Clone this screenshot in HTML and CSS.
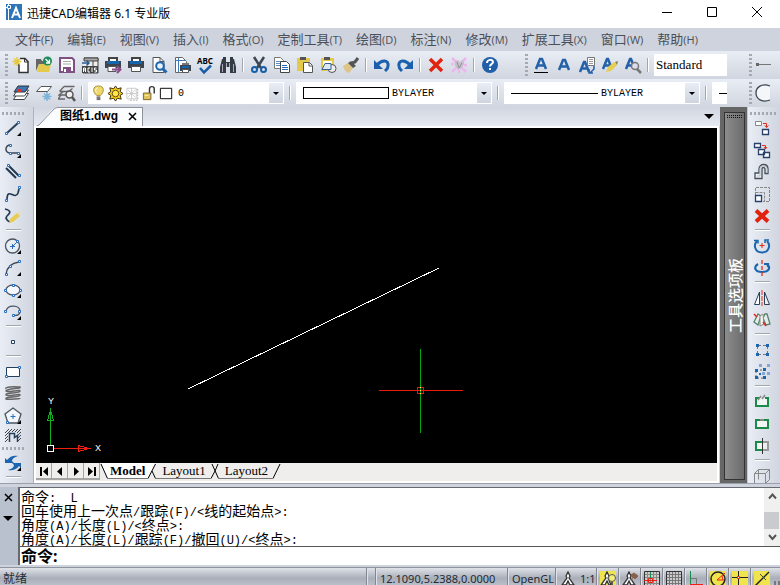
FILE: index.html
```
<!DOCTYPE html>
<html lang="zh-CN">
<head>
    <meta charset="UTF-8">
    <meta name="viewport" content="width=device-width, initial-scale=1.0">
    <title>迅捷CAD编辑器 6.1 专业版</title>
    <link rel="stylesheet" href="styles.css">
</head>
<body>
    <header class="titlebar">
        <svg class="logo" width="16" height="16" viewBox="0 0 16 16">
            <path d="M0 0h16v16H0z" fill="#2d74b8"/>
            <path d="M0 3.500h5M2.500 0v16" stroke="#fff" fill="none"/>
            <path d="M1.500 1.500h3v3h-3z" fill="#2d74b8" stroke="#fff"/>
            <path d="M6 14l4-10 4 10M7.500 10.500h5" stroke="#fff" stroke-width="2" fill="none"/>
        </svg>
        <h1>迅捷CAD编辑器 6.1 专业版</h1>
        <div class="window-buttons">
            <button aria-label="最小化"><svg width="11" height="11"><path d="M0 5.500h10" stroke="#000"/></svg></button>
            <button aria-label="最大化"><svg width="11" height="11"><path d="M.5 .5h9v9h-9z" fill="none" stroke="#000"/></svg></button>
            <button aria-label="关闭"><svg width="11" height="11"><path d="M0 0l10 10M10 0L0 10" stroke="#000"/></svg></button>
        </div>
    </header>

    <nav class="menu">
        <a href="#">文件<span>(F)</span></a>
        <a href="#">编辑<span>(E)</span></a>
        <a href="#">视图<span>(V)</span></a>
        <a href="#">插入<span>(I)</span></a>
        <a href="#">格式<span>(O)</span></a>
        <a href="#">定制工具<span>(T)</span></a>
        <a href="#">绘图<span>(D)</span></a>
        <a href="#">标注<span>(N)</span></a>
        <a href="#">修改<span>(M)</span></a>
        <a href="#">扩展工具<span>(X)</span></a>
        <a href="#">窗口<span>(W)</span></a>
        <a href="#">帮助<span>(H)</span></a>
    </nav>

    <!-- Standard + text style toolbars -->
    <div class="toolbar-row">
        <div class="toolbar">
            <i class="grip"></i>
            <button aria-label="新建"><svg viewBox="0 0 18 18"><path d="M8 2.500h5l3 3v11H7V8" fill="#fff" stroke="#333" stroke-width="1.500"/><path d="M12.500 2.500v3.500H16" fill="none" stroke="#333"/><path d="M5 1v9M.5 5.500h9M2 2.500l6 6M8 2.500l-6 6" stroke="#e5c840" stroke-width="1.300"/></svg></button>
            <button aria-label="打开"><svg viewBox="0 0 18 18"><path d="M1 15V3h5l1 2h4v3H4z" fill="#666"/><path d="M4 8h12l-2 8H2z" fill="#e3ca4c"/><circle cx="12.500" cy="5" r="4.500" fill="#1f8a5b"/><path d="M10.500 3l4 4M14.500 3.500V7H11" stroke="#fff" stroke-width="1.300" fill="none"/></svg></button>
            <button aria-label="保存"><svg viewBox="0 0 18 18"><path d="M2 2h12l2 2v12H2z" fill="#fff" stroke="#805084" stroke-width="2"/><path d="M5 11h8v5H5z" fill="#805084"/><path d="M6 13h2v3H6z" fill="#fff"/><path d="M5 5.500h8M5 8h8" stroke="#aaa"/></svg></button>
            <button aria-label="ACIS"><svg viewBox="0 0 18 18"><path d="M3 2h14v15H2v-6" fill="#eee" stroke="#444"/><path d="M3 2h14v3H3zM12 5v5" fill="#aaa" stroke="#444"/><path d="M1 10h16v7H1z" fill="#444"/><path d="M2.500 16v-4h2v4M2.500 14h2M9 12H7v4h2M11 11.500V16M15.500 12h-2v2h2v2h-2" stroke="#fff" fill="none"/><path d="M1 7h7M5.500 4.500L8 7 5.500 9.500" fill="none" stroke="#2b5c94" stroke-width="1.500"/></svg></button>
            <button aria-label="导出打印"><svg viewBox="0 0 18 18"><path d="M4 1h10v4H4z" fill="#444"/><path d="M6 3h6v2H6z" fill="#fff"/><path d="M1 5h16v7H1z" fill="#3d444d"/><path d="M3 5h12v3H3z" fill="#1467ad"/><path d="M4 10.500h8v5H4z" fill="#fff" stroke="#555"/><path d="M8 13.500h8M13 10l3.500 3.500L13 17" fill="none" stroke="#8a4c8b" stroke-width="2"/></svg></button>
            <button aria-label="打印"><svg viewBox="0 0 18 18"><path d="M4 1h10v4H4z" fill="#444"/><path d="M6 3h6v2H6z" fill="#fff"/><path d="M1 5h16v7H1z" fill="#3d444d"/><path d="M3 5h12v3H3z" fill="#1467ad"/><path d="M4.500 10.500h9v5h-9z" fill="#fff" stroke="#555"/></svg></button>
            <button aria-label="打印预览"><svg viewBox="0 0 18 18"><path d="M3 1.500h7l4 4v11H3z" fill="#fff" stroke="#555"/><path d="M10 1.500v4h4" fill="none" stroke="#555"/><circle cx="10" cy="10" r="3.800" fill="#e7f1fa" stroke="#1f66ad" stroke-width="2"/><path d="M12.500 12.500l4 4" stroke="#1f66ad" stroke-width="3"/></svg></button>
            <button aria-label="页面设置"><svg viewBox="0 0 18 18"><path d="M2.500 1.500h7l4 4v11h-11z" fill="#fff" stroke="#666"/><path d="M5.500 2v14M3 4.500h10" stroke="#3f79b7"/><path d="M7 9h11v6H7z" fill="#3d444d"/><path d="M9 7h7v2H9z" fill="#777"/><path d="M9 10h7v2H9z" fill="#1467ad"/><path d="M9.500 13.500h6v3h-6z" fill="#fff" stroke="#555"/></svg></button>
            <button aria-label="拼写检查"><svg class="abc" viewBox="0 0 18 18"><text x="1" y="8">ABC</text><path d="M4 12l4 4.500 7-7" fill="none" stroke="#1a5da6" stroke-width="2.500"/></svg></button>
            <button aria-label="查找"><svg viewBox="0 0 18 18"><path d="M3 3h4v3h4V3h4l2 8v6h-6v-6H7v6H1v-6z" fill="#333c45"/><path d="M4 1h3v2H4zM11 1h3v2h-3z" fill="#333c45"/><path d="M7.500 7v4M10.500 7v4M3.500 8v8M14.500 8v8" stroke="#aab"/></svg></button>
            <i class="sep"></i>
            <button aria-label="剪切"><svg viewBox="0 0 18 18"><path d="M4 1l7 11M14 1L7 12" stroke="#3b4754" stroke-width="2.500"/><circle cx="4.500" cy="13.500" r="2.500" fill="none" stroke="#175ea8" stroke-width="2"/><circle cx="13.500" cy="13.500" r="2.500" fill="none" stroke="#175ea8" stroke-width="2"/></svg></button>
            <button aria-label="复制"><svg viewBox="0 0 18 18"><path d="M1.500 1.500h6l3 3v8h-9z" fill="#fff" stroke="#777"/><path d="M3 5.500h5M3 7.500h5M3 9.500h5" stroke="#5490cf"/><path d="M7.500 5.500h6l3 3v8h-9z" fill="#fff" stroke="#444"/><path d="M9 9.500h5M9 11.500h6M9 13.500h6" stroke="#2467b4"/></svg></button>
            <button aria-label="粘贴"><svg viewBox="0 0 18 18"><path d="M1 2h13v13H1z" fill="#e3ca4c"/><path d="M4 1h6v3H4z" fill="#555"/><path d="M7.500 6.500h6l3 3v7h-9z" fill="#fff" stroke="#555"/><path d="M13 7v3h3" fill="none" stroke="#555"/></svg></button>
            <button aria-label="选择性粘贴"><svg viewBox="0 0 18 18"><path d="M2 2h13v13H2z" fill="#e3ca4c"/><path d="M4 5h9v8H4z" fill="#fff"/><path d="M5 1h6v3H5z" fill="#555"/><circle cx="13" cy="12.500" r="4" fill="#eee" stroke="#555"/><path d="M6 7.500h6v6H3z" fill="#dde8f5" stroke="#3b5f8c"/></svg></button>
            <button aria-label="格式刷"><svg viewBox="0 0 18 18"><path d="M1 10l5-3 5 5-4 5c-3 0-5-4-6-7z" fill="#dfc487"/><path d="M6 7l3-2 5 5-3 2z" fill="#555"/><path d="M10 7l3-1 3-4" fill="none" stroke="#555" stroke-width="3"/></svg></button>
            <i class="sep"></i>
            <button aria-label="撤销"><svg viewBox="0 0 18 18"><path d="M1 4v9h9z" fill="#1a60ad"/><path d="M4 9c5-6 12-5 11 1 0 3-2 4-3 5" fill="none" stroke="#1a60ad" stroke-width="3"/></svg></button>
            <button aria-label="重做"><svg viewBox="0 0 18 18"><path d="M17 4v9H8z" fill="#1a60ad"/><path d="M14 9C9 3 2 4 3 10c0 3 2 4 3 5" fill="none" stroke="#1a60ad" stroke-width="3"/></svg></button>
            <i class="sep"></i>
            <button aria-label="删除"><svg viewBox="0 0 18 18"><path d="M3 3l12 12M15 3L3 15" stroke="#e02410" stroke-width="3.500"/></svg></button>
            <button aria-label="分解"><svg viewBox="0 0 18 18"><path d="M2 2l4 4M16 2l-4 4M2 16l4-4M16 16l-4-4M1 8h3M14 9h3M9 14v3" stroke="#eeb5ef" stroke-width="2.500"/><path d="M5 5l3-1 2 2 3-2 1 4-2 4-4 2-3-4z" fill="#c8bccd"/><path d="M7 6l2 6 3-5" stroke="#8d9691" fill="none"/></svg></button>
            <i class="sep"></i>
            <button aria-label="帮助"><svg viewBox="0 0 18 18"><circle cx="9" cy="9" r="8" fill="#215fa9"/><path d="M6 7c0-4 6-4 6-1 0 2-3 2-3 4.500" fill="none" stroke="#fff" stroke-width="2"/><path d="M8 12h2v2H8z" fill="#fff"/></svg></button>
        </div>
        <div class="toolbar text-bar">
            <i class="grip"></i>
            <button aria-label="下划线文字"><svg viewBox="0 0 18 18"><path d="M4 13L8 3h2l4 10M6 9.500h6" fill="none" stroke="#2461a8" stroke-width="2.500"/><path d="M2 16.500h14" stroke="#000"/></svg></button>
            <button aria-label="文字"><svg viewBox="0 0 18 18"><path d="M4 14L8 4h2l4 10M6 10.500h6" fill="none" stroke="#2461a8" stroke-width="2.500"/></svg></button>
            <button aria-label="多行文字"><svg viewBox="0 0 18 18"><path d="M2 16L6 6h1l4 10M4 12.500h5" fill="none" stroke="#2461a8" stroke-width="2.500"/><path d="M9.500 1.500h7v8h-7z" fill="#fff" stroke="#777"/><path d="M11 3.500h4M11 5.500h4M11 7.500h4" stroke="#999"/><path d="M16 10v3l-4 4M11 13v4h4" fill="none" stroke="#2461a8" stroke-width="1.500"/></svg></button>
            <button aria-label="编辑文字"><svg viewBox="0 0 18 18"><path d="M2 13L6 3h1l4 10M4 9.500h5" fill="none" stroke="#2461a8" stroke-width="2.500"/><path d="M5 16l2-5 6-5 3 3-6 6z" fill="#e7cd52"/><path d="M14 6l3-1-1 4z" fill="#8a7e4c"/></svg></button>
            <button aria-label="查找文字"><svg viewBox="0 0 18 18"><path d="M2 13L6 3h1l4 10M4 9.500h5" fill="none" stroke="#2461a8" stroke-width="2.500"/><circle cx="11" cy="10" r="3.500" fill="#dde" stroke="#777" stroke-width="1.500"/><path d="M13 13l4 4" stroke="#777" stroke-width="2.500"/></svg></button>
            <i class="sep"></i>
            <input class="style-name" type="text" value="Standard" aria-label="文字样式">
        </div>
        <div class="toolbar end-bar">
            <i class="grip"></i>
            <button aria-label="点标记"><svg viewBox="0 0 18 18"><path d="M4 8.500h14" stroke="#777"/><path d="M3 7h3v3H3z" fill="#666"/></svg></button>
        </div>
    </div>

    <!-- Layer, colour and linetype toolbars -->
    <div class="toolbar-row">
        <div class="toolbar props-bar">
            <i class="grip"></i>
            <button aria-label="图层"><svg viewBox="0 0 18 18"><path d="M5.500 9.500h11l-4 6H1.500z" fill="#fff" stroke="#444"/><path d="M5.500 6h11l-4 6H1.500z" fill="#fff" stroke="#444"/><path d="M6 2h11l-4 6H2z" fill="#3c74b5" stroke="#333"/><path d="M6 5h3v3H6z" fill="#d63426"/></svg></button>
            <button aria-label="冻结图层"><svg viewBox="0 0 18 18"><path d="M6 2.500h10.500l-4 5H1.500z" fill="#fff" stroke="#555"/><path d="M12 8v9M7.500 12.500h9M9 9.500l6 6M15 9.500l-6 6" stroke="#7db2d9" stroke-width="1.500"/></svg></button>
            <button aria-label="查找图层"><svg viewBox="0 0 18 18"><path d="M6 2.500h10.500M1.500 7.500L6 2.500M1.500 7.500h9l4-3M6 7l-5 4h7M3 11l-3 4h7" fill="none" stroke="#666" stroke-width="1.300"/><circle cx="11.500" cy="10.500" r="3.500" fill="#eee" stroke="#555" stroke-width="1.500"/><path d="M14 13l3 4" stroke="#555" stroke-width="2.500"/></svg></button>
            <i class="sep"></i>
            <div class="combo layer">
                <svg viewBox="0 0 18 18"><path d="M9 1c-7 0-6 7-2 10h4c4-3 5-10-2-10z" fill="#f1d86b" stroke="#a08c3a"/><path d="M8 3c-3 1-2 4-1 5" stroke="#fff" fill="none"/><path d="M7 12h4v4H7z" fill="#777"/></svg>
                <svg viewBox="0 0 18 18"><path d="M9 1l2 3 4-1-1 4 3 2-3 2 1 4-4-1-2 3-2-3-4 1 1-4-3-2 3-2-1-4 4 1z" fill="#f3c71f" stroke="#3d300c"/><circle cx="9" cy="9" r="3.500" fill="#ffe74a" stroke="#5d4a10"/></svg>
                <svg viewBox="0 0 18 18"><path d="M8 3v12M2 9h12M4 5l8 8M12 5l-8 8M3 3.500h10v11H3z" fill="none" stroke="#ccc"/><path d="M14.500 4v12H5" fill="none" stroke="#aaa" stroke-dasharray="2 1"/></svg>
                <svg viewBox="0 0 18 18"><path d="M9 9V4c0-3 5-3 5 0v5" fill="none" stroke="#333" stroke-width="1.500"/><path d="M2.500 8.500h8v7h-8z" fill="#e1c45b" stroke="#77622b"/><path d="M4 11h4" stroke="#fff0af"/></svg>
                <svg viewBox="0 0 18 18"><path d="M2.500 3.500h12v11h-12z" fill="#fff" stroke="#000"/></svg>
                <select aria-label="图层"><option>0</option></select>
                <i class="arrow"></i>
            </div>
            <i class="sep"></i>
            <div class="combo">
                <i class="swatch"></i>
                <select aria-label="颜色"><option>BYLAYER</option></select>
                <i class="arrow"></i>
            </div>
            <i class="sep"></i>
            <div class="combo">
                <i class="dash"></i>
                <select aria-label="线型"><option>BYLAYER</option></select>
                <i class="arrow"></i>
            </div>
            <i class="sep"></i>
            <div class="combo cut"><i class="dash"></i></div>
        </div>
        <div class="toolbar end-bar">
            <i class="grip"></i>
            <button aria-label="圆弧"><svg viewBox="0 0 18 18"><path d="M17 2c-8-3-14 1-14 7s6 10 14 7" fill="#f4f6fa" stroke="#3d4650" stroke-width="1.300"/></svg></button>
        </div>
    </div>

    <main class="workspace">
        <aside class="side left" aria-label="绘图工具">
            <i class="hgrip"></i>
            <button class="more" aria-label="直线"><svg viewBox="0 0 18 18"><path d="M3 14L14 4" stroke="#27415c" stroke-width="2"/><path d="M1.500 13.500h2v2h-2zM13.500 2.500h2v2h-2z" class="node"/></svg></button>
            <button class="more" aria-label="多段线"><svg viewBox="0 0 18 18"><path d="M7 4C1 3 0 12 6 12h9" fill="none" stroke="#3d4650" stroke-width="1.500"/><path d="M5.500 3.500h2v2h-2zM5.500 11.500h2v2h-2zM13.500 11.500h2v2h-2z" class="node"/></svg></button>
            <button aria-label="双线"><svg viewBox="0 0 18 18"><path d="M2 5l10 10M5 3l10 10" stroke="#22394f" stroke-width="2"/><path d="M3.500 1.500h2v2h-2zM14.500 11.500h2v2h-2z" class="node"/></svg></button>
            <button aria-label="样条曲线"><svg viewBox="0 0 18 18"><path d="M3 15c0-14 8 1 11-7l1-4" fill="none" stroke="#22394f" stroke-width="1.700"/><path d="M1.500 14.500h2v2h-2zM14.500 1.500h2v2h-2z" class="node"/></svg></button>
            <button aria-label="徒手画"><svg viewBox="0 0 18 18"><path d="M1 2c8 2 4 5 2 7s0 5 3 6" fill="none" stroke="#22394f" stroke-width="1.700"/><path d="M5 16l1-4 7-6 3 3-7 6z" fill="#e7cd52"/><path d="M14 5l2-1 1 2-1 2z" fill="#e9dfa5"/></svg></button>
            <i class="hsep"></i>
            <button class="more" aria-label="圆"><svg viewBox="0 0 18 18"><circle cx="8.500" cy="9" r="7" fill="#e8eef6" stroke="#4a5561" stroke-width="1.300"/><path d="M6 9.500h5M8.500 7v5M9 9l4-4" stroke="#2a6ebd"/><path d="M12.500 3.500h2v2h-2z" class="node"/></svg></button>
            <button class="more" aria-label="圆弧"><svg viewBox="0 0 18 18"><path d="M2 15C3 8 8 4 15 3" fill="none" stroke="#3d4650" stroke-width="1.300"/><path d="M1.500 14.500h2v2h-2zM5.500 6.500h2v2h-2zM14.500 1.500h2v2h-2z" class="node"/></svg></button>
            <button class="more" aria-label="椭圆"><svg viewBox="0 0 18 18"><ellipse cx="9" cy="9" rx="7" ry="5" fill="#f4f7fb" stroke="#4a5561" stroke-width="1.300"/><path d="M.5 8.500h2v2h-2zM15.500 8.500h2v2h-2zM8.500 3.500h2v2h-2zM8.500 13.500h2v2h-2z" class="node"/></svg></button>
            <button class="more" aria-label="椭圆弧"><svg viewBox="0 0 18 18"><path d="M2 8c2-7 14-6 14 0 0 4-3 5-7 4" fill="none" stroke="#4a5561" stroke-width="1.300"/><path d="M.5 7.500h2v2h-2zM14.500 7.500h2v2h-2zM8.500 11.500h2v2h-2z" class="node"/></svg></button>
            <i class="hsep"></i>
            <button aria-label="点"><svg viewBox="0 0 18 18"><path d="M7.500 7.500h3v3h-3z" fill="#fff" stroke="#27415c"/></svg></button>
            <i class="hsep"></i>
            <button aria-label="矩形"><svg viewBox="0 0 18 18"><path d="M2.500 4.500h13v9h-13z" fill="#fff" stroke="#27415c"/><path d="M1.500 12.500h2v2h-2zM14.500 3.500h2v2h-2z" class="node"/></svg></button>
            <button aria-label="弹簧"><svg viewBox="0 0 18 18"><path d="M2 4c-2-3 12-2 14-2 2 2-13 1-14 4 2 2 14-2 14 0 0 3-15 1-14 4 3 2 14-2 14 0 0 3-15 1-14 4 3 1 14-1 14 0" fill="none" stroke="#666" stroke-width="1.500"/></svg></button>
            <button class="more" aria-label="多边形"><svg viewBox="0 0 18 18"><path d="M9 1l8 6-3 9H4L1 7z" fill="#f2f6fa" stroke="#4a5561" stroke-width="1.300"/><path d="M6.500 9.500h5M9 7v5" stroke="#2a6ebd"/><path d="M2.500 14.500h2v2h-2z" class="node"/></svg></button>
            <button class="short" aria-label="填充"><svg viewBox="0 0 18 18"><path d="M1 6l4-4M1 9l7-7M1 12l3-3M1 15l3-3M8 5l3-3M11 5l3-3M13 6l4-4M14 8l3-3M14 11l3-3M14 14l3-3" stroke="#3d4650"/><path d="M5.500 15V6.500h5v4l3-2V15" fill="none" stroke="#27415c" stroke-width="1.500"/></svg></button>
            <i class="hgrip"></i>
            <button class="more" aria-label="重生成"><svg viewBox="0 0 18 18"><path d="M1 4l2 2c3-4 7-5 11-4-4 1-6 3-6 5l2 2H1z" fill="#1b66ae"/><path d="M17 14l-2-2c-3 4-7 5-11 4 4-1 6-3 6-5l-2-2h9z" fill="#1b66ae"/></svg></button>
            <i class="hsep"></i>
        </aside>

        <section class="document">
            <div class="doc-tabs">
                <svg class="slant" width="22" height="20"><path d="M0 20C6 18 14 0 22 0v20z" fill="#fbfcfe"/><path d="M0 19.500L3 18 18 2q2-1.500 4-1.500" fill="none" stroke="#8e939e"/></svg>
                <div class="doc-tab">图纸1.dwg
                    <button aria-label="关闭图纸"><svg width="9" height="9"><path d="M1 1l7 7M8 1L1 8" stroke="#000" stroke-width="1.500"/></svg></button>
                </div>
                <button class="tab-list" aria-label="图纸列表"><i class="tri"></i></button>
            </div>
            <div class="sheet">
                <svg class="drawing" shape-rendering="crispEdges">
                    <path d="M152 261L403 140" stroke="#fff"/>
                    <!-- cursor -->
                    <path d="M343 262.500h84" stroke="#e8190c"/>
                    <path d="M384.500 221v84" stroke="#00a814"/>
                    <rect x="381.500" y="259.500" width="6" height="6" fill="none" stroke="#e8190c"/>
                    <path d="M384 259h1v1h-1zM384 262h1v1h-1zM384 265h1v1h-1z" fill="#ffe85a"/>
                    <!-- UCS axes -->
                    <path d="M14.500 317v-34M11.500 292.500h6L14.500 282z" fill="none" stroke="#12b020"/>
                    <path d="M18 320.500h34M42.500 317.500v6L53 320.500z" fill="none" stroke="#f01f10"/>
                    <rect x="11.500" y="317.500" width="6" height="6" fill="none" stroke="#fff"/>
                    <text x="12" y="276">Y</text>
                    <text x="59" y="323">X</text>
                </svg>
                <div class="layout-tabs">
                    <button class="nav" aria-label="第一个"><svg viewBox="0 0 14 14"><path d="M4 3v9" stroke="#000" stroke-width="2"/><path d="M11 3v9L6 7.500z"/></svg></button>
                    <button class="nav" aria-label="上一个"><svg viewBox="0 0 14 14"><path d="M9 3v9L4 7.500z"/></svg></button>
                    <button class="nav" aria-label="下一个"><svg viewBox="0 0 14 14"><path d="M5 3v9l5-4.500z"/></svg></button>
                    <button class="nav" aria-label="最后一个"><svg viewBox="0 0 14 14"><path d="M3 3v9l5-4.500z"/><path d="M10 3v9" stroke="#000" stroke-width="2"/></svg></button>
                    <svg class="edge" viewBox="0 0 8 16"><path d="M1 0h7v16z" fill="#fff"/><path d="M1 1l6.500 14.500" stroke="#000" fill="none"/></svg>
                    <a href="#" class="active">Model</a>
                    <svg class="edge" viewBox="0 0 8 16"><path d="M0 0h7L0 16z" fill="#fff"/><path d="M7.500 1L0 15.500M4 8l3.500 7.500" stroke="#000" fill="none"/></svg>
                    <a href="#">Layout1</a>
                    <svg class="edge" viewBox="0 0 8 16"><path d="M4 8L0 15.500M1 1l6.500 14.500M7 1L4 8" stroke="#000" fill="none"/></svg>
                    <a href="#">Layout2</a>
                    <svg class="edge" viewBox="0 0 8 16"><path d="M7 1L0 15.500" stroke="#000" fill="none"/></svg>
                </div>
            </div>
        </section>

        <aside class="palette">
            <div class="palette-bar">
                <i class="palette-grip"></i>
                <span>工具选项板</span>
            </div>
        </aside>

        <aside class="side right" aria-label="修改工具">
            <i class="hgrip"></i>
            <button aria-label="复制对象"><svg viewBox="0 0 18 18"><path d="M2.500 2.500h6v4h-6z" fill="#fff" stroke="#888"/><path d="M9.500 10.500h6v5h-6z" fill="#fff" stroke="#27416b" stroke-width="1.300"/><path d="M10 4.500h3.500V8M12 6.500l1.500 2 2-2" fill="none" stroke="#df2b19"/></svg></button>
            <button aria-label="多重复制"><svg viewBox="0 0 18 18"><path d="M1.500 2.500h6v4h-6zM5.500 8.500h6v5h-6zM10.500 11.500h6v5h-6z" fill="#fff" stroke="#27416b" stroke-width="1.300"/><path d="M9 4.500h3.500v3M11 6l1.500 2L14 6" fill="none" stroke="#df2b19"/></svg></button>
            <button aria-label="偏移"><svg viewBox="0 0 18 18"><path d="M2 15.500V10h4V6c0-6 9-6 9 0v4.500h-3V6c0-2-3-2-3 0v9.500z" fill="#eef1f5" stroke="#45505e" stroke-width="1.300"/><path d="M4 13h3V6C7 2 14 2 14 6v4" fill="none" stroke="#bbb"/></svg></button>
            <button aria-label="缩放"><svg viewBox="0 0 18 18"><path d="M2.500 10V2.500h14v14H10M2.500 7.500h9v9" fill="none" stroke="#888" stroke-dasharray="3 1"/><path d="M2.500 10.500h6v6h-6z" fill="#fff" stroke="#27416b" stroke-width="1.300"/></svg></button>
            <button aria-label="删除"><svg viewBox="0 0 18 18"><path d="M3 3.500l12 11M15 3.500l-12 11" stroke="#e3220e" stroke-width="4"/></svg></button>
            <i class="hsep"></i>
            <button aria-label="旋转"><svg viewBox="0 0 18 18"><path d="M4 4C0 8 2 15.500 9 15.500S18 8 14 4" fill="none" stroke="#1b66ae" stroke-width="2"/><path d="M1 3.500h4v3M12 6V3h4" fill="none" stroke="#1b66ae" stroke-width="1.500"/><path d="M6.500 8.500h5M9 6v5" stroke="#df2b19"/></svg></button>
            <button aria-label="三维旋转"><svg viewBox="0 0 18 18"><path d="M5 5c-5 3-3 8 4 8s9-4 5-8M11 5h4v3" fill="none" stroke="#1b66ae" stroke-width="2.200"/><path d="M9 1v16" stroke="#ef2c18" stroke-dasharray="4 2" stroke-width="1.300"/></svg></button>
            <i class="hsep"></i>
            <button aria-label="镜像"><svg viewBox="0 0 18 18"><path d="M6.500 3v12.500h-5z" fill="#fff" stroke="#27415c"/><path d="M11.500 3v12.500h5z" fill="#eee" stroke="#27415c"/><path d="M9 1v16" stroke="#ef2c18" stroke-dasharray="5 1"/></svg></button>
            <button aria-label="三维镜像"><svg viewBox="0 0 18 18"><path d="M5 3l3 2-3 9-4-3zM12 3l2 0 3 10-4 1-3-7z" fill="#e7eee9" stroke="#578171" stroke-width="1.300"/><path d="M7 5l3-2 1 10-4 2z" fill="#f0f2f2" stroke="#888"/><path d="M1 3l3 3M10 11l3 4" stroke="#df2b19" stroke-width="1.500"/></svg></button>
            <i class="hsep"></i>
            <button aria-label="阵列"><svg viewBox="0 0 18 18"><path d="M4.500 5v8M14.500 5v8M5 4.500h9M5 13.500h9" stroke="#777" stroke-dasharray="3 2"/><path d="M3 3h3v3H3zM13 3h3v3h-3zM3 12h3v3H3zM13 12h3v3h-3z" fill="#1b66ae"/></svg></button>
            <button aria-label="三维阵列"><svg viewBox="0 0 18 18"><path d="M3 8v6M3 7h12M4 15h7" stroke="#666" stroke-dasharray="2 2"/><path d="M6 1h3v3H6zM14 1h3v3h-3zM14 9h3v3h-3zM9 9h3v3H9z" fill="#7da8d7"/><path d="M2 6h3v3H2zM10 5h3v3h-3zM2 13h3v3H2zM10 13h3v3h-3zM6 10h2v2H6z" fill="#1b66ae"/></svg></button>
            <i class="hsep"></i>
            <button aria-label="打断"><svg viewBox="0 0 18 18"><path d="M6 5H3v8h12V5h-3" fill="#f2f5f4" stroke="#1b8b49" stroke-width="2"/><path d="M5 7l3-4M9 6l3-4" stroke="#888" stroke-width="1.500"/></svg></button>
            <button aria-label="合并"><svg viewBox="0 0 18 18"><path d="M3 5h12v8H3z" fill="#f2f5f4" stroke="#1b8b49" stroke-width="2"/><path d="M7 5h4" stroke="#888" stroke-width="2"/></svg></button>
            <button aria-label="修剪"><svg viewBox="0 0 18 18"><path d="M10 5H3v8h7" fill="#f2f5f4" stroke="#1b8b49" stroke-width="2"/><path d="M10 5h5v8h-5" fill="#eee" stroke="#999" stroke-width="2"/><path d="M9.500 1v16" stroke="#333"/></svg></button>
            <i class="hsep"></i>
            <button aria-label="长方体"><svg viewBox="0 0 18 18"><path d="M1.500 6.500h11v10h-11zM1.500 6.500l4-4h11v10l-4 4M12.500 6.500l4-4M5.500 2.500v10" fill="none" stroke="#888"/></svg></button>
        </aside>
    </main>

    <section class="command">
        <div class="command-side">
            <button aria-label="关闭命令行"><svg width="9" height="9"><path d="M1 1l7 7M8 1L1 8" stroke="#000" stroke-width="1.500"/></svg></button>
            <button aria-label="命令行选项"><i class="tri"></i></button>
        </div>
        <div class="command-body">
            <div class="history">
                <div class="lines">
                    <p>命令<span>:  L</span></p>
                    <p>回车使用上一次点<span>/</span>跟踪<span>(F)/&lt;</span>线的起始点<span>&gt;:</span></p>
                    <p>角度<span>(A)/</span>长度<span>(L)/&lt;</span>终点<span>&gt;:</span></p>
                    <p>角度<span>(A)/</span>长度<span>(L)/</span>跟踪<span>(F)/</span>撤回<span>(U)/&lt;</span>终点<span>&gt;:</span></p>
                </div>
                <div class="scroll">
                    <button aria-label="向上"><svg width="9" height="7"><path d="M1 5.500l3.500-4 3.500 4" fill="none" stroke="#555" stroke-width="2"/></svg></button>
                    <i class="thumb"></i>
                    <button aria-label="向下"><svg width="9" height="7"><path d="M1 1l3.500 4L8 1" fill="none" stroke="#555" stroke-width="2"/></svg></button>
                </div>
            </div>
            <div class="prompt">
                <label for="cmd">命令:</label>
                <input id="cmd" type="text">
            </div>
        </div>
    </section>

    <footer class="status">
        <span class="ready">就绪</span>
        <span class="cell gap"></span>
        <span class="cell coords">12.1090,5.2388,0.0000</span>
        <span class="cell gl">OpenGL</span>
        <span class="cell scale">
            <svg viewBox="0 0 16 16"><path d="M8 1l2 4-1 2 5 7h-4l-2-4-2 4H2l5-7-1-2z" fill="#fff" stroke="#333" stroke-width="1.300"/></svg>
            1:1
        </span>
        <button class="cell" aria-label="注释可见性"><svg viewBox="0 0 16 16"><path d="M0 0h16v16H0z" fill="#f0e44c"/><path d="M7 1l2 4-1 2 3 7H9l-2-4-2 4H1l5-7-1-2z" fill="#fff" stroke="#333" stroke-width="1.300"/><circle cx="12" cy="7" r="3.500" fill="#f5ed7a" stroke="#555"/><path d="M11 11h2v4h-2z" fill="#555"/></svg></button>
        <button class="cell" aria-label="自动比例"><svg viewBox="0 0 16 16"><path d="M7 1l2 4-1 2 5 7H9l-2-4-2 4H1l5-7-1-2z" fill="#fff" stroke="#333" stroke-width="1.300"/><path d="M9 4l3-2 4 3-3 3zM11 6l-2 4" fill="#87604e" stroke="#87604e"/></svg></button>
        <button class="cell" aria-label="捕捉"><svg viewBox="0 0 16 16"><path d="M.5.5h15v15H.5z" fill="#ccc" stroke="#333"/><path d="M3.500 1v14M6.500 1v14M9.500 1v14M12.500 1v14M1 3.500h14M1 6.500h14M1 12.500h14" stroke="#888"/><path d="M6.500 1v6" stroke="#1b8b49"/><path d="M0 9.500h13M4.500 7.500h4v4h-4z" fill="none" stroke="#ef2010"/></svg></button>
        <button class="cell" aria-label="栅格"><svg viewBox="0 0 16 16"><path d="M.5.5h15v15H.5z" fill="#ccc" stroke="#333"/><path d="M3.500 1v14M6.500 1v14M9.500 1v14M12.500 1v14M1 3.500h14M1 6.500h14M1 9.500h14M1 12.500h14" stroke="#777"/></svg></button>
        <button class="cell" aria-label="正交"><svg viewBox="0 0 16 16"><path d="M2.500 0v13" stroke="#1b8b49"/><path d="M2.500 7.500h6v6" fill="none" stroke="#777"/><path d="M2 13.500h13" stroke="#ef2010"/></svg></button>
        <button class="cell" aria-label="极轴"><svg viewBox="0 0 16 16"><path d="M0 0h16v16H0z" fill="#f0e44c"/><circle cx="8" cy="8" r="7" fill="none" stroke="#222" stroke-width="1.500"/><path d="M15 2L7 9h7M12 5l1 4" fill="none" stroke="#ef2010"/></svg></button>
        <button class="cell" aria-label="对象捕捉"><svg viewBox="0 0 16 16"><path d="M0 0h16v16H0z" fill="#f0e44c"/><path d="M6.500 0v16M0 6.500h16" stroke="#222"/><path d="M5.500 5.500h2v2h-2z" fill="#fff" stroke="#ef2010"/></svg></button>
        <button class="cell" aria-label="对象追踪"><svg viewBox="0 0 16 16"><path d="M0 0h16v16H0z" fill="#f0e44c"/><path d="M1 15L15 1" stroke="#222" stroke-width="1.500"/><path d="M6 3l6 6M0 14.500h9" stroke="#444"/></svg></button>
        <i class="resize"></i>
    </footer>
</body>
</html>
```

FILE: styles.css
```
* {
    box-sizing: border-box;
}
body {
    margin: 0;
    height: 100vh;
    display: flex;
    flex-direction: column;
    overflow: hidden;
    background-color: #ced3dd;
    font-family: "Noto Sans", "Noto Sans CJK SC", sans-serif;
    font-size: 12px;
    color: #000;
}
button {
    display: flex;
    align-items: center;
    justify-content: center;
    padding: 0;
    border: none;
    background: none;
    flex: none;
}
a {
    color: inherit;
    text-decoration: none;
}
svg {
    flex: none;
    display: block;
}
i {
    flex: none;
}

/* Title bar */
.titlebar {
    flex: none;
    display: flex;
    align-items: center;
    height: 28px;
    padding-left: 6px;
    background-color: #fff;
}
.titlebar h1 {
    flex: 1;
    margin: 0 0 0 5px;
    padding-bottom: 2px;
    font-size: 12px;
    font-weight: normal;
}
.logo {
    margin-bottom: 4px;
}
.window-buttons {
    display: flex;
    padding-bottom: 3px;
}
.window-buttons button {
    width: 45px;
    height: 24px;
}

/* Menu */
.menu {
    flex: none;
    display: flex;
    align-items: center;
    gap: 14px;
    height: 23px;
    padding: 0 15px 3px;
    font-size: 13px;
    white-space: nowrap;
    color: #4a4f59;
}
.menu span {
    font-family: "Open Sans", sans-serif;
    font-size: 11px;
}

/* Toolbars */
.toolbar-row {
    flex: none;
    display: flex;
    height: 28px;
    background: linear-gradient(#e9edf5, #d0d5df);
}
.toolbar {
    display: flex;
    align-items: center;
    flex: none;
    width: 520px;
}
.toolbar button {
    width: 23px;
    height: 24px;
}
.toolbar svg {
    width: 18px;
    height: 18px;
}
.toolbar .abc {
    overflow: visible;
    font-family: "Noto Sans", sans-serif;
    font-size: 8px;
    font-weight: bold;
}
.text-bar {
    width: auto;
    flex: 1;
}
.props-bar {
    width: auto;
    flex: 1;
}
.end-bar {
    width: 36px;
    padding-right: 9px;
    overflow: hidden;
}
.end-bar button {
    width: 18px;
}
.grip {
    width: 3px;
    height: 22px;
    margin: 0 1px 0 5px;
    background: repeating-linear-gradient(#a4a8b1 0 2px, transparent 2px 4px);
}
.sep {
    width: 2px;
    height: 14px;
    margin: 0 3px;
    border-left: 1px solid #a2a6ae;
    background-color: #fff;
}
.style-name {
    width: 73px;
    height: 22px;
    margin-left: 2px;
    padding: 0 2px;
    border: none;
    background-color: #fff;
    font-family: "Liberation Serif", serif;
    font-size: 13px;
}
.combo {
    position: relative;
    display: flex;
    align-items: center;
    flex: none;
    width: 196px;
    height: 22px;
    margin: 0 2px;
    background-color: #fff;
}
.combo.layer svg {
    width: 17px;
    height: 17px;
}
.layer {
    padding-left: 2px;
}
.combo select {
    flex: 1;
    min-width: 0;
    height: 22px;
    padding: 0 3px;
    border: none;
    appearance: none;
    background: linear-gradient(#e9edf4, #cfd4de) right 1px center / 14px 20px no-repeat;
    font-family: "Liberation Mono", monospace;
    font-size: 10px;
    color: #000;
}
.arrow {
    position: absolute;
    right: 5px;
    top: 10px;
    border: 3px solid transparent;
    border-top-color: #000;
    border-bottom: none;
    pointer-events: none;
}
.swatch {
    width: 86px;
    height: 12px;
    margin-left: 7px;
    border: 1px solid #000;
}
.dash {
    width: 87px;
    height: 1px;
    margin-left: 7px;
    background-color: #000;
}
.combo.cut {
    width: 15px;
    overflow: hidden;
}

/* Workspace */
.workspace {
    flex: 1;
    min-height: 0;
    display: flex;
    border-bottom: 1px solid #9a9fa9;
}
.side {
    flex: none;
    display: flex;
    flex-direction: column;
    overflow: hidden;
    background: linear-gradient(to right, #e9edf5, #d0d5df);
}
.left {
    width: 34px;
    padding-right: 7px;
    border-right: 1px solid #aeb3bc;
}
.right {
    width: 32px;
    padding-right: 4px;
}
.side button {
    position: relative;
    width: 100%;
    height: 22px;
}
.side svg {
    width: 18px;
    height: 18px;
}
.side .short {
    height: 15px;
    overflow: hidden;
    align-items: flex-start;
}
.node {
    fill: #fff;
    stroke: #2a6ebd;
}
/* flyout corner */
.more::after {
    content: "";
    position: absolute;
    right: 5px;
    bottom: 3px;
    border: 2px solid #000;
    border-top-color: transparent;
    border-left-color: transparent;
}
.hgrip {
    height: 3px;
    margin: 5px 0 2px 2px;
    background: repeating-linear-gradient(to right, #a4a8b1 0 2px, transparent 2px 4px);
}
.hsep {
    width: 15px;
    height: 2px;
    margin: 2px auto 4px;
    border-top: 1px solid #a2a6ae;
    background-color: #fff;
}
.document {
    flex: 1;
    min-width: 0;
    display: flex;
    flex-direction: column;
}
.doc-tabs {
    flex: none;
    display: flex;
    height: 19px;
    padding-left: 2px;
    background: linear-gradient(#d0d5df, #e6eaf2);
}
.doc-tab {
    display: flex;
    align-items: center;
    gap: 10px;
    padding: 0 5px 2px 2px;
    border: 1px solid #8e939e;
    border-width: 1px 1px 0 0;
    background-color: #fbfcfe;
    font-family: "Liberation Sans", "Noto Sans CJK SC", sans-serif;
    font-weight: bold;
    line-height: 18px;
}
.tab-list {
    width: 20px;
    margin-left: auto;
    padding-right: 2px;
}
.tri {
    border: 5px solid transparent;
    border-top-color: #000;
    border-bottom: none;
}
.sheet {
    flex: 1;
    min-height: 0;
    display: flex;
    flex-direction: column;
    margin-right: 1px;
    border: 2px solid #fff;
}
.drawing {
    flex: 1;
    min-height: 0;
    width: 100%;
    background-color: #000;
}
.drawing text {
    font-family: "Liberation Sans", sans-serif;
    font-size: 9px;
    fill: #fff;
}
.layout-tabs {
    flex: none;
    display: flex;
    height: 18px;
    background-color: #efeeec;
    font-family: "Liberation Serif", serif;
    font-size: 13px;
}
.nav {
    width: 16px;
    height: 17px;
    border-right: 1px solid #a5a5a5;
    border-bottom: 2px solid #a5a5a5;
}
.nav svg {
    width: 14px;
    height: 14px;
}
.edge {
    width: 8px;
    height: 16px;
}
.layout-tabs a {
    height: 16px;
    padding: 0 5px 0 6px;
    border-bottom: 1px solid #777;
    line-height: 16px;
}
.layout-tabs .active {
    padding: 0 3px 0 2px;
    background-color: #fff;
    font-weight: bold;
}

/* Tool palette */
.palette {
    flex: none;
    width: 28px;
    padding: 5px 2px 3px 4px;
    border-right: 1px solid #c4c8d0;
    background-color: #666;
}
.palette-bar {
    position: relative;
    display: flex;
    align-items: center;
    justify-content: center;
    height: 100%;
    border: 1px solid #333;
    background: linear-gradient(to right, #8c8c8c, #6c6c6c);
}
.palette-grip {
    position: absolute;
    top: 2px;
    left: 2px;
    right: 2px;
    height: 3px;
    background: repeating-linear-gradient(to right, #111 0 1px, transparent 1px 2px);
}
.palette-grip::after {
    content: "";
    display: block;
    height: 1px;
    margin-top: 1px;
    background-color: #7c7c7c;
}
.palette span {
    writing-mode: vertical-rl;
    text-orientation: sideways;
    transform: rotate(180deg);
    font-size: 15px;
    font-weight: 500;
    line-height: 20px;
    color: #fff;
}

/* Command line */
.command {
    flex: none;
    display: flex;
    height: 83px;
    padding: 3px 0 2px;
}
.command-side {
    flex: none;
    display: flex;
    flex-direction: column;
    align-items: center;
    gap: 12px;
    width: 18px;
    padding: 6px 2px 0 0;
    background-color: #b9c0ce;
}
.command-side button {
    height: 9px;
}
.command-body {
    flex: 1;
    min-width: 0;
    display: flex;
    flex-direction: column;
    border-top: 1px solid #66696e;
    border-left: 2px solid #66696e;
    background-color: #fff;
}
.history {
    flex: 1;
    min-height: 0;
    display: flex;
    border-bottom: 1px solid #555;
}
.lines {
    flex: 1;
    min-width: 0;
    padding: 1px 1px 0;
    font-family: "Noto Sans CJK SC", sans-serif;
    font-size: 14px;
    line-height: 14px;
}
.lines p {
    height: 14px;
    margin: 0;
    white-space: pre;
}
.lines span {
    font-family: "Liberation Mono", monospace;
    font-size: 12px;
}
.scroll {
    flex: none;
    display: flex;
    flex-direction: column;
    width: 16px;
    background-color: #f0f0f0;
}
.scroll button {
    height: 17px;
    width: 16px;
}
.thumb {
    height: 17px;
    margin: auto 1px 0 0;
    background-color: #cacbce;
}
.prompt {
    flex: none;
    display: flex;
    align-items: center;
    height: 18px;
    padding-left: 1px;
    font-size: 16px;
    font-weight: bold;
}
.prompt label {
    line-height: 18px;
}
.prompt input {
    flex: 1;
    height: 16px;
    border: none;
    outline: none;
    background: none;
}

/* Status bar */
.status {
    flex: none;
    display: flex;
    height: 18px;
    overflow: hidden;
    border-top: 1px solid #8f949e;
    background: linear-gradient(#dfe2e8, #a9aeb8 60%, #b9bec8);
    font-size: 11px;
    line-height: 21px;
    color: #222b36;
}
.ready {
    flex: 1;
    padding-left: 3px;
    font-size: 12px;
}
.cell {
    flex: none;
    width: 22px;
    border-left: 1px solid #83878f;
    box-shadow: inset 1px 0 #dfe2e8;
}
.status button {
    align-items: flex-start;
    padding-top: 3px;
}
.status svg {
    width: 16px;
    height: 16px;
}
.gap {
    width: 9px;
}
.coords {
    width: 132px;
    padding-left: 4px;
}
.gl {
    width: 48px;
    padding-left: 4px;
}
.scale {
    display: flex;
    gap: 4px;
    width: 41px;
    padding-left: 4px;
}
.scale svg {
    margin-top: 3px;
}
.resize {
    width: 8px;
    margin: 13px 0 0;
    background: repeating-linear-gradient(to right, transparent 0 2px, #777 2px 4px);
}
```
